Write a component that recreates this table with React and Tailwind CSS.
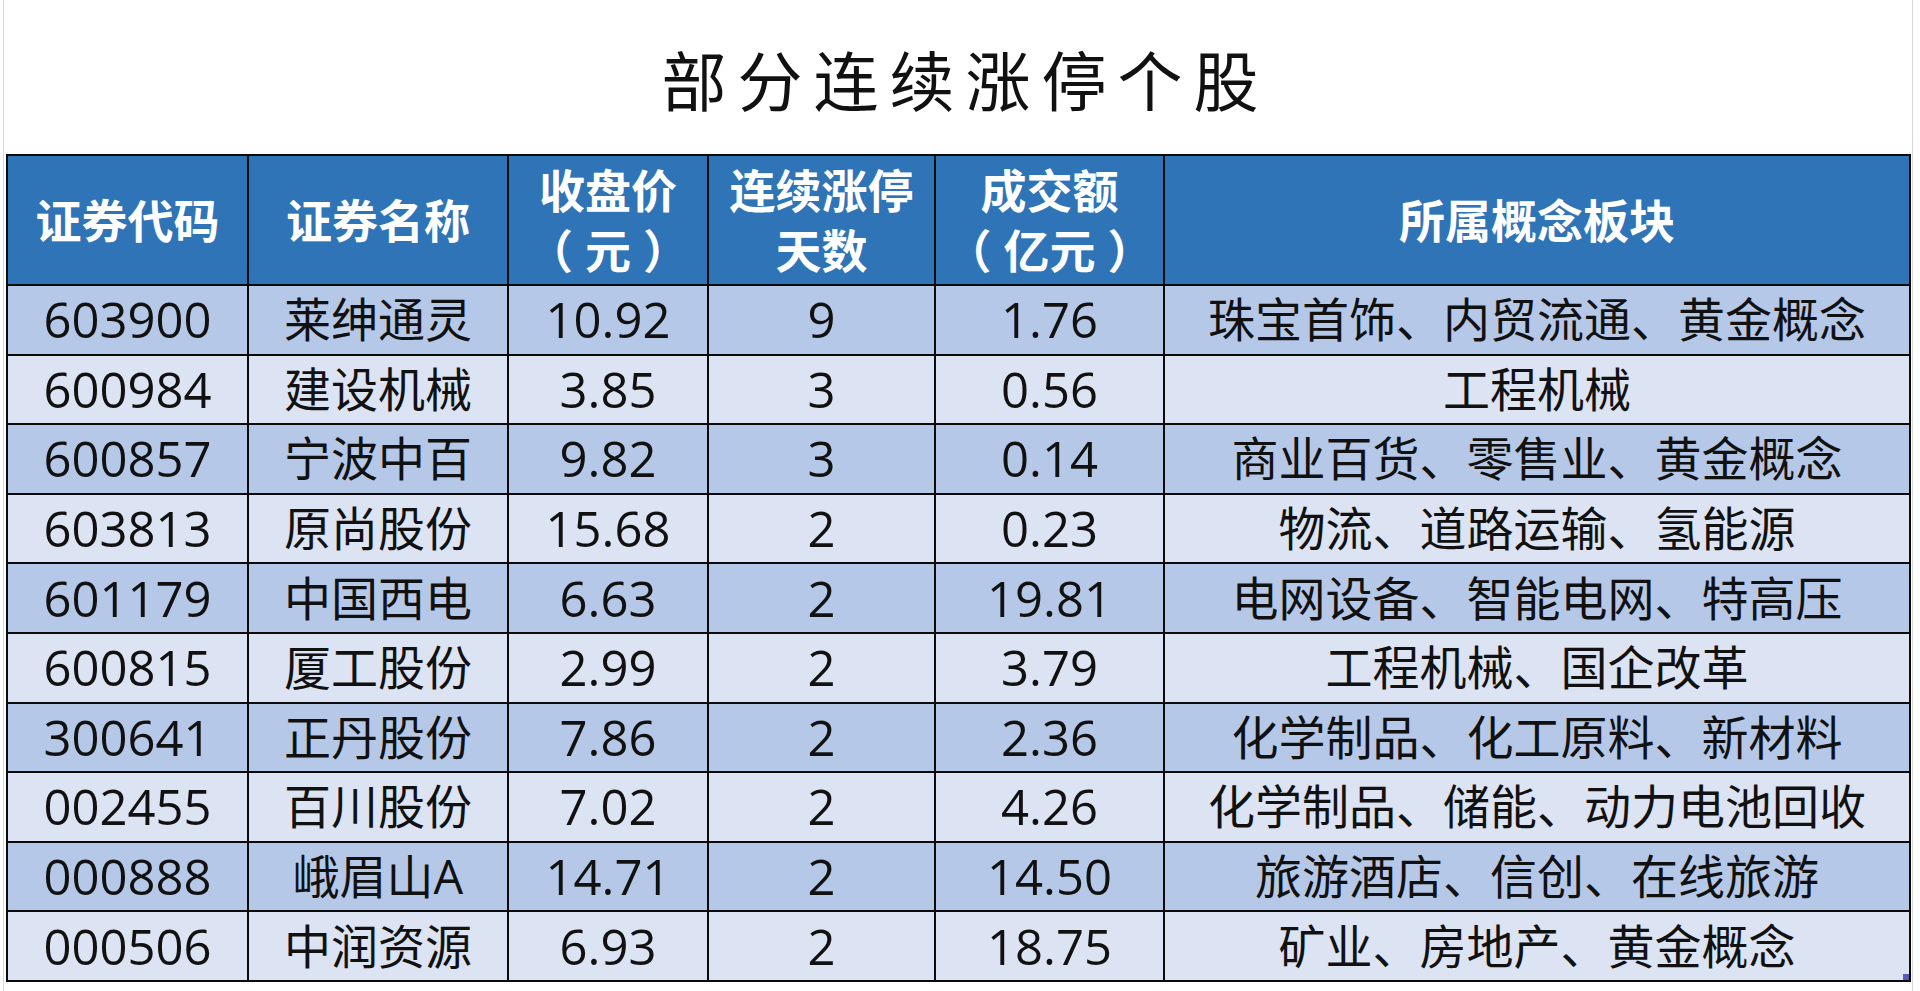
import React from "react";

const rows = [
  ["603900", "莱绅通灵", "10.92", "9", "1.76", "珠宝首饰、内贸流通、黄金概念"],
  ["600984", "建设机械", "3.85", "3", "0.56", "工程机械"],
  ["600857", "宁波中百", "9.82", "3", "0.14", "商业百货、零售业、黄金概念"],
  ["603813", "原尚股份", "15.68", "2", "0.23", "物流、道路运输、氢能源"],
  ["601179", "中国西电", "6.63", "2", "19.81", "电网设备、智能电网、特高压"],
  ["600815", "厦工股份", "2.99", "2", "3.79", "工程机械、国企改革"],
  ["300641", "正丹股份", "7.86", "2", "2.36", "化学制品、化工原料、新材料"],
  ["002455", "百川股份", "7.02", "2", "4.26", "化学制品、储能、动力电池回收"],
  ["000888", "峨眉山A", "14.71", "2", "14.50", "旅游酒店、信创、在线旅游"],
  ["000506", "中润资源", "6.93", "2", "18.75", "矿业、房地产、黄金概念"],
];

const headers = [
  ["证券代码"],
  ["证券名称"],
  ["收盘价", "（ 元 ）"],
  ["连续涨停", "天数"],
  ["成交额", "（ 亿元 ）"],
  ["所属概念板块"],
];

const cjk = "font-['Open_Sans','Noto_Sans_CJK_SC',sans-serif]";

export default function App() {
  return (
    <div className="relative w-[1920px] h-[991px] bg-white overflow-hidden">
      <div className="absolute left-[3px] top-0 h-full w-px bg-[#d8d8d8]" />
      <div className="absolute left-[1912px] top-0 h-full w-px bg-[#d8d8d8]" />
      <div className="h-[154px] flex items-center justify-center pt-[2px]">
        <h1 className="font-['Noto_Sans_CJK_SC',serif] text-[65px] leading-none font-normal tracking-[11px] text-[#111] pl-[11px]">
          部分连续涨停个股
        </h1>
      </div>
      <div className="relative ml-[6px] w-[1905px]">
        <div className="grid grid-cols-[239px_258px_198px_225px_227px_1fr] grid-rows-[128px_repeat(10,67.6px)] gap-[2px] p-[2px] bg-[#0b0b0b]">
          {headers.map((h, i) => (
            <div
              key={i}
              className={`bg-[#2e74b6] flex flex-col items-center justify-center text-white font-bold text-[46px] leading-[60px] whitespace-pre ${cjk}`}
            >
              {h.map((line, j) => (
                <span key={j}>{line}</span>
              ))}
            </div>
          ))}
          {rows.map((r, ri) =>
            r.map((c, ci) => (
              <div
                key={`${ri}-${ci}`}
                className={`${ri % 2 === 0 ? "bg-[#b6c8e7]" : "bg-[#dce3f2]"} flex items-center justify-center text-[#111] leading-none ${cjk} ${
                  ci === 1 || ci === 5 ? "text-[47px]" : "text-[49px]"
                }`}
              >
                {c}
              </div>
            ))
          )}
        </div>
        <div className="absolute right-[2px] bottom-[2px] w-[6px] h-[6px] bg-[#5a5ab8]" />
      </div>
    </div>
  );
}
